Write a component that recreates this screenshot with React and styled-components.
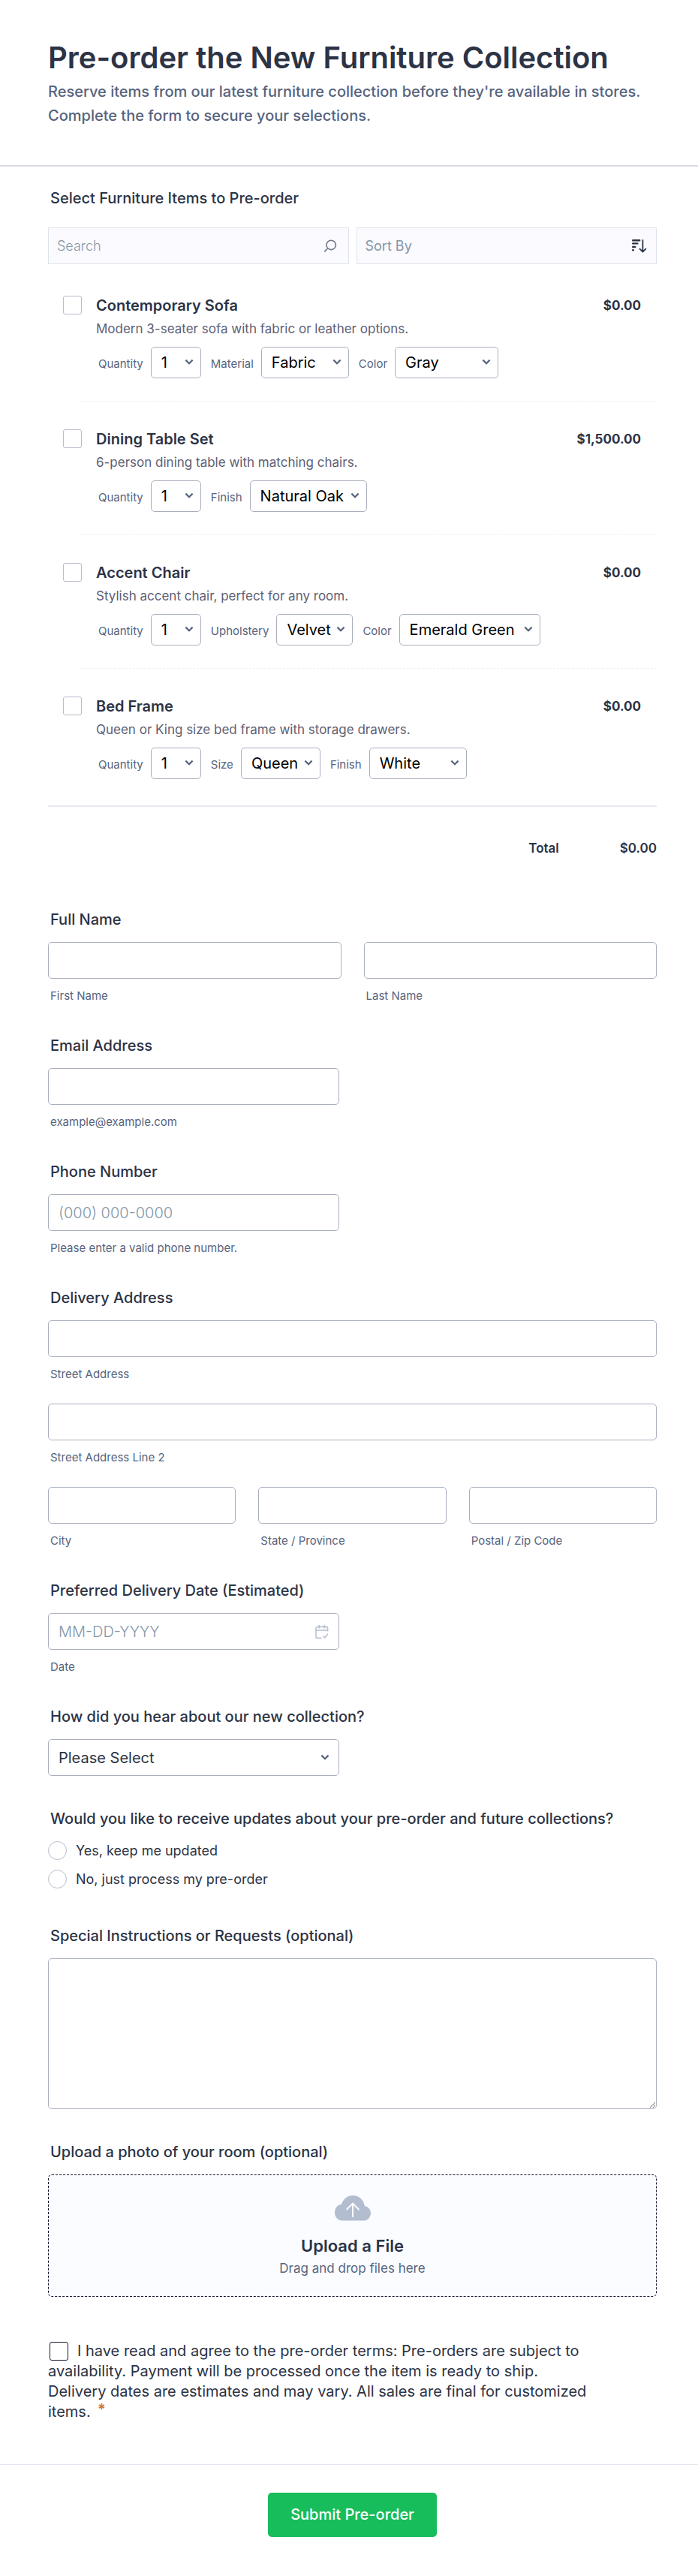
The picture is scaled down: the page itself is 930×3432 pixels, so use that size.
import React, { useState } from "react";
import styled, { createGlobalStyle } from "styled-components";

const products = [
    {
        id: "sofa",
        name: "Contemporary Sofa",
        description: "Modern 3-seater sofa with fabric or leather options.",
        price: "$0.00",
        options: [
            { label: "Material", width: 117, values: ["Fabric", "Leather"] },
            { label: "Color", width: 138, values: ["Gray", "Navy Blue", "Beige"] },
        ],
    },
    {
        id: "dining",
        name: "Dining Table Set",
        description: "6-person dining table with matching chairs.",
        price: "$1,500.00",
        options: [
            { label: "Finish", width: 156, values: ["Natural Oak", "Walnut"] },
        ],
    },
    {
        id: "chair",
        name: "Accent Chair",
        description: "Stylish accent chair, perfect for any room.",
        price: "$0.00",
        options: [
            { label: "Upholstery", width: 102, values: ["Velvet", "Linen"] },
            { label: "Color", width: 188, values: ["Emerald Green", "Mustard"] },
        ],
    },
    {
        id: "bed",
        name: "Bed Frame",
        description: "Queen or King size bed frame with storage drawers.",
        price: "$0.00",
        options: [
            { label: "Size", width: 106, values: ["Queen", "King"] },
            { label: "Finish", width: 130, values: ["White", "Espresso"] },
        ],
    },
];

const quantity = { label: "Quantity", width: 67, values: ["1", "2", "3", "4", "5"] };

const Chevron = () => (
    <ChevronIcon viewBox="0 0 12 8" aria-hidden="true">
        <path d="M1.4 1.6 6 6.2l4.6-4.6" />
    </ChevronIcon>
)

const OptionSelect = ({ id, option }) => (
    <>
        <OptionLabel htmlFor={id}>{option.label}</OptionLabel>
        <SelectWrapper $width={option.width}>
            <SmallSelect id={id}>
                {option.values.map(value => <option key={value}>{value}</option>)}
            </SmallSelect>
            <Chevron />
        </SelectWrapper>
    </>
)

const Product = ({ product, last }) => (
    <ProductRow>
        <CheckCell>
            <Checkbox type="checkbox" id={product.id} />
        </CheckCell>
        <ProductBody $last={last}>
            <div>
                <ProductName htmlFor={product.id}>{product.name}</ProductName>
                <ProductText>{product.description}</ProductText>
                <Options>
                    {[quantity, ...product.options].map(option =>
                        <OptionSelect
                            key={option.label}
                            id={product.id + "-" + option.label}
                            option={option}
                        />
                    )}
                </Options>
            </div>
            <Price>{product.price}</Price>
        </ProductBody>
    </ProductRow>
)

const TextField = ({ id, hint, type = "text" }) => (
    <Column>
        <Input id={id} type={type} />
        <Hint htmlFor={id}>{hint}</Hint>
    </Column>
)

const App = () => {

    const [updates, setUpdates] = useState("")

    return (
        <>
            <GlobalStyle />
            <Form onSubmit={e => e.preventDefault()}>
                <Header>
                    <Title>Pre-order the New Furniture Collection</Title>
                    <Subtitle>
                        Reserve items from our latest furniture collection before they're
                        available in stores. Complete the form to secure your selections.
                    </Subtitle>
                </Header>
                <Content>
                    <section>
                        <GroupTitle>Select Furniture Items to Pre-order</GroupTitle>
                        <Filters>
                            <FilterBox>
                                <FilterInput type="text" placeholder="Search" aria-label="Search" />
                                <SearchIcon viewBox="0 0 18 18" aria-hidden="true">
                                    <circle cx="10.2" cy="7.4" r="6.2" />
                                    <path d="M5.6 12 1.2 16.4" />
                                </SearchIcon>
                            </FilterBox>
                            <FilterBox>
                                <FilterSelect aria-label="Sort By">
                                    <option>Sort By</option>
                                    <option>Name</option>
                                    <option>Price</option>
                                </FilterSelect>
                                <SortIcon viewBox="0 0 20 20" aria-hidden="true">
                                    <path strokeWidth="2.4" d="M1.2 2.2h9M1.2 6.4h6.2M1.2 11h3M1.2 15.2h.6" />
                                    <path strokeWidth="1.8" d="M14.4 2v15.2M10.4 13.6l4 3.8 4-3.8" />
                                </SortIcon>
                            </FilterBox>
                        </Filters>
                        <ProductList>
                            {products.map((product, i) =>
                                <Product
                                    key={product.id}
                                    product={product}
                                    last={i === products.length - 1}
                                />
                            )}
                        </ProductList>
                        <Total>
                            <span>Total</span>
                            <span>$0.00</span>
                        </Total>
                    </section>

                    <section>
                        <GroupTitle>Full Name</GroupTitle>
                        <Row>
                            <TextField id="first" hint="First Name" />
                            <TextField id="last" hint="Last Name" />
                        </Row>
                    </section>

                    <section>
                        <GroupTitle>Email Address</GroupTitle>
                        <Half>
                            <TextField id="email" type="email" hint="example@example.com" />
                        </Half>
                    </section>

                    <section>
                        <FieldLabel htmlFor="phone">Phone Number</FieldLabel>
                        <Half>
                            <Input id="phone" type="tel" placeholder="(000) 000-0000" />
                            <Hint htmlFor="phone">Please enter a valid phone number.</Hint>
                        </Half>
                    </section>

                    <section>
                        <GroupTitle>Delivery Address</GroupTitle>
                        <Address>
                            <TextField id="street" hint="Street Address" />
                            <TextField id="street2" hint="Street Address Line 2" />
                            <Row>
                                <TextField id="city" hint="City" />
                                <TextField id="state" hint="State / Province" />
                                <TextField id="zip" hint="Postal / Zip Code" />
                            </Row>
                        </Address>
                    </section>

                    <section>
                        <GroupTitle>Preferred Delivery Date (Estimated)</GroupTitle>
                        <Half>
                            <IconField>
                                <Input id="date" type="text" placeholder="MM-DD-YYYY" />
                                <CalendarIcon viewBox="0 0 18 20" aria-hidden="true">
                                    <path d="M16.6 9.6V5.4a2 2 0 0 0-2-2H3a2 2 0 0 0-2 2v11a2 2 0 0 0 2 2h5.4M1 8h15.6M5.2 1v4.6M12.4 1v4.6M10.6 15.8l2.2 2 4-5" />
                                </CalendarIcon>
                            </IconField>
                            <Hint htmlFor="date">Date</Hint>
                        </Half>
                    </section>

                    <section>
                        <FieldLabel htmlFor="source">How did you hear about our new collection?</FieldLabel>
                        <Half>
                            <IconField>
                                <Select id="source">
                                    <option>Please Select</option>
                                    <option>Friend</option>
                                    <option>Social Media</option>
                                </Select>
                                <Chevron />
                            </IconField>
                        </Half>
                    </section>

                    <section>
                        <GroupTitle>Would you like to receive updates about your pre-order and future collections?</GroupTitle>
                        <RadioList>
                            {["Yes, keep me updated", "No, just process my pre-order"].map(answer =>
                                <RadioLabel key={answer}>
                                    <Radio
                                        type="radio"
                                        name="updates"
                                        checked={updates === answer}
                                        onChange={() => setUpdates(answer)}
                                    />
                                    {answer}
                                </RadioLabel>
                            )}
                        </RadioList>
                    </section>

                    <section>
                        <FieldLabel htmlFor="notes">Special Instructions or Requests (optional)</FieldLabel>
                        <TextArea id="notes" />
                    </section>

                    <section>
                        <GroupTitle>Upload a photo of your room (optional)</GroupTitle>
                        <DropZone>
                            <FileInput type="file" />
                            <CloudIcon viewBox="0 0 48 34" aria-hidden="true">
                                <path
                                    fill="#b3bdd0"
                                    d="M10 33.500C4.400 33.500 0 28.800 0 22.800 0 17 3.800 12.400 9 11.800 11.200 4.800 17 0 24 0c8.200 0 14.800 6 15.800 14.200C44.400 14.600 48 18.600 48 23.600c0 5.600-4 9.900-9 9.900Z"
                                />
                                <path fill="none" stroke="#fafcff" strokeWidth="2" d="M24 29V11M15.600 19 24 10.600 32.400 19" />
                            </CloudIcon>
                            <DropTitle>Upload a File</DropTitle>
                            <DropText>Drag and drop files here</DropText>
                        </DropZone>
                    </section>

                    <Terms>
                        <TermsCheckbox type="checkbox" id="terms" />
                        <label htmlFor="terms">
                            I have read and agree to the pre-order terms: Pre-orders are subject to
                            availability. Payment will be processed once the item is ready to ship.
                            Delivery dates are estimates and may vary. All sales are final for
                            customized{" "}
                            <LastWord>
                                items.
                                <Required>*</Required>
                            </LastWord>
                        </label>
                    </Terms>
                </Content>
                <Footer>
                    <Submit type="submit">Submit Pre-order</Submit>
                </Footer>
            </Form>
        </>
    )
}

const GlobalStyle = createGlobalStyle`
  *, *::before, *::after {
    box-sizing: border-box;
  }
  body {
    margin: 0;
    background: #fff;
    color: #2c3345;
    font-family: Inter, "Liberation Sans", sans-serif;
    font-size: 20px;
    line-height: 24px;
  }
  input, select, textarea, button {
    font-family: inherit;
    margin: 0;
  }
`;

const Form = styled.form`
  width: 100%;
`;

const Header = styled.header`
  padding: 53px 55px 50px 64px;
  border-bottom: 2px solid #dadbe4;
`;

const Title = styled.h1`
  margin: 0 0 5px;
  font-size: 40px;
  line-height: 48px;
  font-weight: 600;
`;

const Subtitle = styled.p`
  margin: 0;
  color: #57647e;
  font-weight: 500;
  line-height: 32px;
`;

const Content = styled.div`
  display: flex;
  flex-direction: column;
  gap: 45px;
  padding: 30px 55px 56px 64px;
`;

const GroupTitle = styled.h2`
  margin: 0 0 18px;
  padding-left: 3px;
  font-size: 20px;
  line-height: 24px;
  font-weight: 500;
`;

const FieldLabel = styled(GroupTitle).attrs({ as: "label" })`
  display: block;
`;

const Filters = styled.div`
  display: flex;
  gap: 10px;
  padding-top: 9px;
`;

const FilterBox = styled.div`
  flex: 1;
  position: relative;
`;

const FilterInput = styled.input`
  display: block;
  width: 100%;
  height: 49px;
  padding: 0 40px 0 11px;
  border: 1px solid #dde3eb;
  border-radius: 0;
  background: #fafaff;
  font-size: 18px;

  &::placeholder {
    color: #8497a8;
    font-weight: 300;
    opacity: 1;
  }
`;

const FilterSelect = styled(FilterInput).attrs({ as: "select" })`
  appearance: none;
  color: #8497a8;
`;

const SearchIcon = styled.svg`
  position: absolute;
  top: 16px;
  right: 16px;
  width: 18px;
  height: 18px;
  fill: none;
  stroke: #6f7687;
  stroke-width: 1.6;
  pointer-events: none;
`;

const SortIcon = styled.svg`
  position: absolute;
  top: 15px;
  right: 13px;
  width: 20px;
  height: 20px;
  fill: none;
  stroke: #2c3345;
  stroke-linecap: round;
  pointer-events: none;
`;

const ProductList = styled.div`
  display: flex;
  flex-direction: column;
  gap: 37px;
  margin-top: 42px;
  padding-bottom: 35px;
  border-bottom: 2px solid #e6e9f0;
`;

const ProductRow = styled.div`
  display: flex;
`;

const CheckCell = styled.div`
  width: 43px;
  padding-left: 20px;
`;

const Checkbox = styled.input`
  appearance: none;
  display: block;
  width: 25px;
  height: 25px;
  border: 1px solid #b8bdc9;
  border-radius: 3px;
  background: #fff;

  &:checked {
    background: #2e69ff;
  }
`;

const ProductBody = styled.div`
  flex: 1;
  display: flex;
  justify-content: space-between;
  padding: 1px 21px 30px;
  border-bottom: 1px dashed #eef0f5;
  ${props => props.$last && "border-bottom: 0; padding-bottom: 0;"}
`;

const ProductName = styled.label`
  display: block;
  font-weight: 600;
`;

const ProductText = styled.p`
  margin: 9px 0 13px;
  color: #5e6074;
  font-size: 17px;
  line-height: 21px;
`;

const Options = styled.div`
  display: flex;
  flex-wrap: wrap;
  align-items: baseline;
`;

const OptionLabel = styled.label`
  padding: 0 10px 0 3px;
  color: #57647e;
  font-size: 15px;
  line-height: 18px;
`;

const SelectWrapper = styled.div`
  position: relative;
  width: ${props => props.$width}px;
  margin-right: 10px;
`;

const ChevronIcon = styled.svg`
  position: absolute;
  top: calc(50% - 5px);
  right: 10px;
  width: 12px;
  height: 8px;
  fill: none;
  stroke: #57647e;
  stroke-width: 2.2;
  pointer-events: none;
`;

const SmallSelect = styled.select`
  appearance: none;
  width: 100%;
  height: 42px;
  padding: 0 0 0 13px;
  border: 1px solid #a9afbe;
  border-radius: 5px;
  background: #fff;
  color: #000;
  font-size: 20px;
`;

const Price = styled.div`
  font-size: 17px;
  line-height: 24px;
  font-weight: 700;
`;

const Total = styled.div`
  display: flex;
  justify-content: flex-end;
  gap: 81px;
  padding: 45px 0 27px;
  font-size: 17px;
  line-height: 21px;
  font-weight: 600;
`;

const Row = styled.div`
  display: flex;
  gap: 30px;
`;

const Column = styled.div`
  flex: 1;
  min-width: 0;
`;

const Half = styled.div`
  width: 388px;
  max-width: 100%;
`;

const Address = styled.div`
  display: flex;
  flex-direction: column;
  gap: 30px;
`;

const Input = styled.input`
  display: block;
  width: 100%;
  height: 49px;
  padding: 0 13px;
  border: 1px solid #a9afbe;
  border-radius: 5px;
  background: #fff;
  color: #2c3345;
  font-size: 20px;

  &::placeholder {
    color: #8497a8;
    font-weight: 300;
    opacity: 1;
  }
`;

const Select = styled(Input).attrs({ as: "select" })`
  appearance: none;
`;

const Hint = styled.label`
  display: block;
  margin-top: 14px;
  padding-left: 3px;
  color: #57647e;
  font-size: 15px;
  line-height: 18px;
`;

const IconField = styled.div`
  position: relative;

  ${ChevronIcon} {
    right: 13px;
  }
`;

const CalendarIcon = styled.svg`
  position: absolute;
  top: 15px;
  right: 14px;
  width: 18px;
  height: 20px;
  fill: none;
  stroke: #b8c0d0;
  stroke-width: 1.6;
  pointer-events: none;
`;

const RadioList = styled.div`
  display: flex;
  flex-direction: column;
  gap: 13px;
  padding-bottom: 6px;
`;

const RadioLabel = styled.label`
  display: flex;
  align-items: center;
  gap: 12px;
  font-size: 18px;
`;

const Radio = styled(Checkbox)`
  border-radius: 50%;
`;

const TextArea = styled.textarea`
  display: block;
  width: 100%;
  height: 201px;
  padding: 10px 13px;
  border: 1px solid #a9afbe;
  border-radius: 5px;
  background: #fff;
  font-size: 20px;
`;

const DropZone = styled.label`
  display: flex;
  flex-direction: column;
  align-items: center;
  padding: 27px 20px 26px;
  border: 1px dashed #14172b;
  border-radius: 5px;
  background: #fafcff;
  cursor: pointer;
`;

const FileInput = styled.input`
  position: absolute;
  width: 1px;
  height: 1px;
  opacity: 0;
`;

const CloudIcon = styled.svg`
  width: 48px;
  height: 34px;
`;

const DropTitle = styled.span`
  margin: 20px 0 6px;
  font-size: 22px;
  line-height: 27px;
  font-weight: 600;
`;

const DropText = styled.span`
  color: #57647e;
  font-size: 17px;
  line-height: 21px;
`;

const Terms = styled.div`
  max-width: 730px;
  margin-top: 14px;
  line-height: 27px;
`;

const TermsCheckbox = styled(Checkbox)`
  display: inline-block;
  margin: 0 12px 0 2px;
  border-color: #14172b;
  vertical-align: -6px;
`;

/* keeps the asterisk on the same line as the word before it */
const LastWord = styled.span`
  display: inline-flex;
  gap: 9px;
`;

const Required = styled.span`
  color: #cf7a44;
  font-weight: 700;
  line-height: 20px;
`;

const Footer = styled.footer`
  display: flex;
  justify-content: center;
  padding: 37px 55px 50px 64px;
  border-top: 1px solid #e6e6f0;
`;

const Submit = styled.button`
  padding: 17px 30px 18px;
  border: 0;
  border-radius: 5px;
  background: #18bd5b;
  color: #fff;
  font-size: 20px;
  line-height: 24px;
  font-weight: 500;
  cursor: pointer;
`;

export default App
